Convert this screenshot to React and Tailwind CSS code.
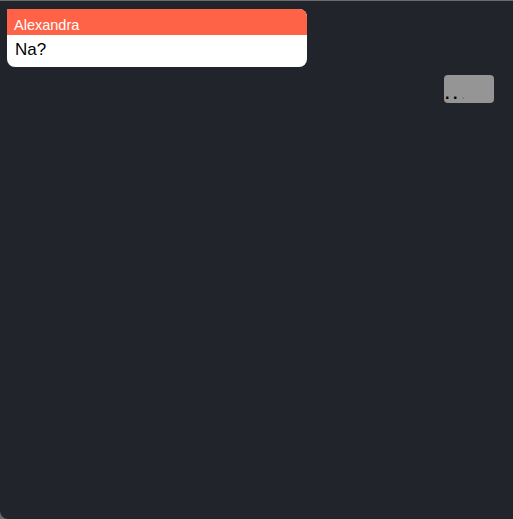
export default function App() {
  return (
    <div
      className="w-[513px] h-[519px] bg-[#6b6b6b] overflow-hidden"
      style={{ fontFamily: '"Liberation Sans", Arial, sans-serif' }}
    >
      <div className="mt-px h-[518px] bg-[#21252b] rounded-bl-[8px] relative">
        <div className="absolute left-[7px] top-[8px] w-[300px] rounded-tr-[8px] rounded-b-[8px] overflow-hidden bg-white">
          <div className="h-[26px] bg-[#ff6347] text-white text-[14.5px] leading-[26px] pl-[7px] pt-[3px]">
            Alexandra
          </div>
          <div className="h-[32px] text-black text-[17px] leading-[30px] pl-[8px]">
            Na?
          </div>
        </div>
        <div className="absolute left-[444px] top-[74px] w-[50px] h-[28px] rounded-[4px] bg-[#959595] overflow-hidden">
          <div className="text-black font-bold text-[16px] leading-[16px] pl-px pt-[11px] tracking-[3.5px]">
            ..<span className="text-[#7a7a7a] font-normal">.</span>
          </div>
        </div>
      </div>
    </div>
  );
}
